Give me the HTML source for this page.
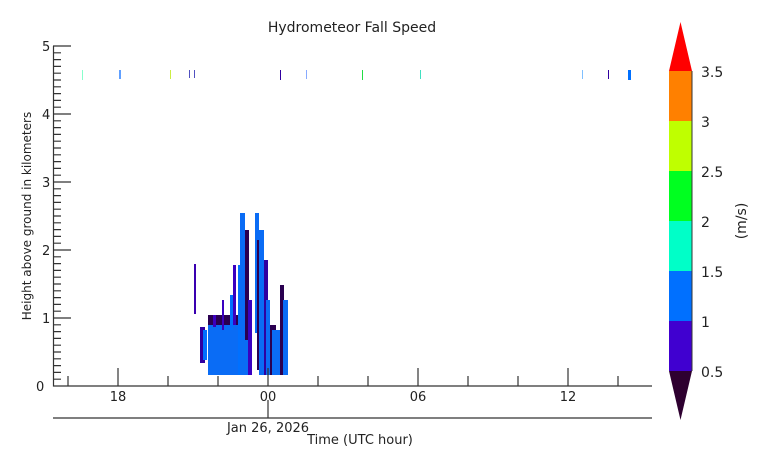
<!DOCTYPE html>
<html><head><meta charset="utf-8"><style>
html,body{margin:0;padding:0;background:#fff;}
svg{display:block;}
text{font-family:"DejaVu Sans","Liberation Sans",sans-serif;fill:#222;}
</style></head><body>
<svg width="769" height="467" viewBox="0 0 769 467" xmlns="http://www.w3.org/2000/svg">
<text x="352" y="32" font-size="14" text-anchor="middle">Hydrometeor Fall Speed</text>
<!-- data -->
<g>
<rect x="194" y="264" width="2" height="50" fill="#3a00b0"/>
<rect x="200" y="327" width="5" height="36" fill="#3000a0"/>
<rect x="203" y="330" width="4" height="30" fill="#0070ff"/>
<rect x="208" y="315" width="44" height="14" fill="#2a0050"/>
<rect x="208" y="325" width="44" height="50" fill="#0a6cf5"/>
<rect x="213" y="315" width="3" height="12" fill="#3a00c0"/>
<rect x="222" y="300" width="2" height="30" fill="#3a00c0"/>
<rect x="230" y="295" width="3" height="35" fill="#0070ff"/>
<rect x="233" y="265" width="3" height="60" fill="#3a00c0"/>
<rect x="238" y="265" width="3" height="110" fill="#0070ff"/>
<rect x="240" y="213" width="5" height="162" fill="#0a6cf5"/>
<rect x="245" y="230" width="4" height="110" fill="#2a0050"/>
<rect x="248" y="300" width="4" height="75" fill="#3a00c0"/>
<rect x="255" y="213" width="4" height="120" fill="#0a6cf5"/>
<rect x="257" y="240" width="4" height="130" fill="#2a0050"/>
<rect x="259" y="230" width="5" height="145" fill="#0a6cf5"/>
<rect x="264" y="260" width="4" height="115" fill="#3000a0"/>
<rect x="266" y="300" width="4" height="75" fill="#0a6cf5"/>
<rect x="270" y="325" width="6" height="50" fill="#2a0050"/>
<rect x="272" y="330" width="8" height="45" fill="#0a6cf5"/>
<rect x="280" y="285" width="4" height="90" fill="#2a0050"/>
<rect x="283" y="300" width="5" height="75" fill="#0a6cf5"/>
</g>
<g>
<rect x="82" y="70" width="1" height="10" fill="#8fc"/>
<rect x="119" y="70" width="2" height="9" fill="#60a0ff"/>
<rect x="170" y="70" width="1" height="9" fill="#ccee44"/>
<rect x="189" y="70" width="1" height="8" fill="#5050c0"/>
<rect x="194" y="70" width="1" height="8" fill="#5050c0"/>
<rect x="280" y="70" width="1" height="10" fill="#3000a0"/>
<rect x="306" y="70" width="1" height="9" fill="#88aaff"/>
<rect x="362" y="70" width="1" height="10" fill="#22dd44"/>
<rect x="420" y="70" width="1" height="9" fill="#40e0c0"/>
<rect x="582" y="70" width="1" height="9" fill="#80c0ff"/>
<rect x="608" y="70" width="1" height="9" fill="#3000a0"/>
<rect x="628" y="70" width="3" height="10" fill="#0070ff"/>
</g>
<!-- axes -->
<g stroke="#333" stroke-width="1.2" fill="none">
<path d="M53.5 46 V386 H652"/>
<path d="M53 46H71 M53 114H71 M53 182H71 M53 250H71 M53 318H71"/>
<path d="M53 52.8H61M53 59.6H61M53 66.4H61M53 73.2H61M53 80H61M53 86.8H61M53 93.6H61M53 100.4H61M53 107.2H61
M53 120.8H61M53 127.6H61M53 134.4H61M53 141.2H61M53 148H61M53 154.8H61M53 161.6H61M53 168.4H61M53 175.2H61
M53 188.8H61M53 195.6H61M53 202.4H61M53 209.2H61M53 216H61M53 222.8H61M53 229.6H61M53 236.4H61M53 243.2H61
M53 256.8H61M53 263.6H61M53 270.4H61M53 277.2H61M53 284H61M53 290.8H61M53 297.6H61M53 304.4H61M53 311.2H61
M53 324.8H61M53 331.6H61M53 338.4H61M53 345.2H61M53 352H61M53 358.8H61M53 365.6H61M53 372.4H61M53 379.2H61"/>
<path d="M118 368V386M268 368V386M418 368V386M568 368V386"/>
<path d="M68 376V386M168 376V386M218 376V386M318 376V386M368 376V386M468 376V386M518 376V386M618 376V386"/>
<path d="M53 418H652 M268 400V418"/>
</g>
<g font-size="13">
<text x="42" y="51">5</text><text x="42" y="119">4</text><text x="42" y="187">3</text>
<text x="42" y="255">2</text><text x="42" y="323">1</text><text x="36" y="391">0</text>
<text x="118" y="401" text-anchor="middle">18</text><text x="268" y="401" text-anchor="middle">00</text>
<text x="418" y="401" text-anchor="middle">06</text><text x="568" y="401" text-anchor="middle">12</text>
<text x="268" y="432" text-anchor="middle">Jan 26, 2026</text>
<text x="360" y="444" text-anchor="middle">Time (UTC hour)</text>
<text transform="translate(31,216) rotate(-90)" text-anchor="middle" font-size="12">Height above ground in kilometers</text>
</g>
<!-- colorbar -->
<polygon points="680.5,22 669,71 692,71" fill="#ff0000"/>
<rect x="669" y="71" width="23" height="50" fill="#ff8000"/>
<rect x="669" y="121" width="23" height="50" fill="#bfff00"/>
<rect x="669" y="171" width="23" height="50" fill="#00ff20"/>
<rect x="669" y="221" width="23" height="50" fill="#00ffc8"/>
<rect x="669" y="271" width="23" height="50" fill="#0070ff"/>
<rect x="669" y="321" width="23" height="50" fill="#4000d0"/>
<polygon points="669,371 692,371 680.5,420" fill="#2e0030"/>
<line x1="692" y1="71" x2="692" y2="371" stroke="#333" stroke-width="1"/>
<g font-size="14">
<text x="701" y="77">3.5</text><text x="701" y="127">3</text><text x="701" y="177">2.5</text>
<text x="701" y="227">2</text><text x="701" y="277">1.5</text><text x="701" y="327">1</text><text x="701" y="377">0.5</text>
<text transform="translate(746,221) rotate(-90)" text-anchor="middle">(m/s)</text>
</g>
</svg>
</body></html>
